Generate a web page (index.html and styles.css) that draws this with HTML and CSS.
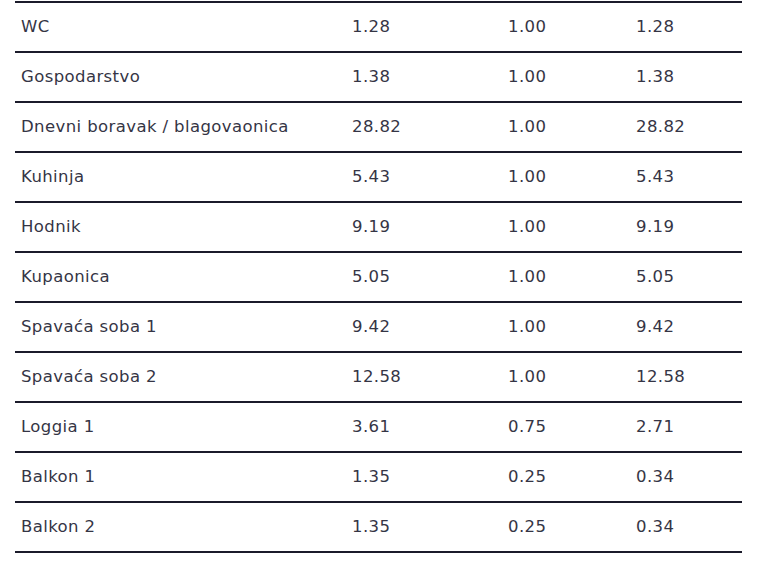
FILE: index.html
```html
<!DOCTYPE html>
<html>
<head>
<meta charset="utf-8">
<link rel="stylesheet" href="styles.css">
</head>
<body>
<table class="rooms">
<tbody>
<tr><td>WC</td><td>1.28</td><td>1.00</td><td>1.28</td></tr>
<tr><td>Gospodarstvo</td><td>1.38</td><td>1.00</td><td>1.38</td></tr>
<tr><td>Dnevni boravak / blagovaonica</td><td>28.82</td><td>1.00</td><td>28.82</td></tr>
<tr><td>Kuhinja</td><td>5.43</td><td>1.00</td><td>5.43</td></tr>
<tr><td>Hodnik</td><td>9.19</td><td>1.00</td><td>9.19</td></tr>
<tr><td>Kupaonica</td><td>5.05</td><td>1.00</td><td>5.05</td></tr>
<tr><td>Spavaća soba 1</td><td>9.42</td><td>1.00</td><td>9.42</td></tr>
<tr><td>Spavaća soba 2</td><td>12.58</td><td>1.00</td><td>12.58</td></tr>
<tr><td>Loggia 1</td><td>3.61</td><td>0.75</td><td>2.71</td></tr>
<tr><td>Balkon 1</td><td>1.35</td><td>0.25</td><td>0.34</td></tr>
<tr><td>Balkon 2</td><td>1.35</td><td>0.25</td><td>0.34</td></tr>
</tbody>
</table>
</body>
</html>
```
FILE: styles.css
```css
html, body {
  margin: 0;
  padding: 0;
  background: #ffffff;
}
body {
  padding: 1px 15px 0 15px;
  font-family: "DejaVu Sans", sans-serif;
  color: #353545;
}
.rooms {
  width: 727px;
  border-collapse: collapse;
  border-top: 2px solid #1b1b2b;
  table-layout: fixed;
}
.rooms td {
  box-sizing: border-box;
  height: 50px;
  padding: 0 0 0 6px;
  border-bottom: 2px solid #1b1b2b;
  font-size: 16.5px;
  font-weight: 400;
  line-height: 20px;
  vertical-align: middle;
  white-space: nowrap;
  letter-spacing: 0.4px;
}
.rooms td:nth-child(1) { width: 331px; }
.rooms td:nth-child(2) { width: 156px; }
.rooms td:nth-child(3) { width: 128px; }
```
